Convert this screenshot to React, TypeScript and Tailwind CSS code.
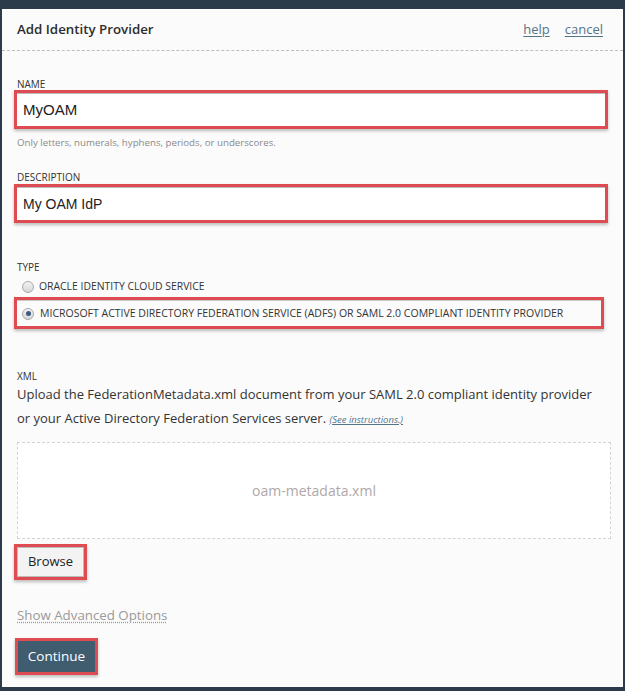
import React from "react";

const font = { fontFamily: '"Open Sans", "Noto Sans", sans-serif' };
const arial = { fontFamily: '"Liberation Sans", Arial, sans-serif' };

function RedBox({ children, className }: { children: React.ReactNode; className: string }) {
  return (
    <div className={"border-[3px] border-[#de4b51] shadow-[0_2px_3px_rgba(0,0,0,0.25)] " + className}>
      {children}
    </div>
  );
}

function Radio({ checked }: { checked?: boolean }) {
  return (
    <span className="inline-flex h-[12px] w-[12px] shrink-0 items-center justify-center rounded-full border border-[#a9a9a9] bg-gradient-to-b from-[#f4f4f4] to-[#d6d6d6]">
      {checked && <span className="h-[5px] w-[5px] rounded-full bg-[#3d5a80]" />}
    </span>
  );
}

export default function App() {
  return (
    <div className="h-[691px] w-[625px] bg-[#2c3b49] pb-[4px] pl-[2px] pr-[2px] pt-[9px]" style={font}>
      <div className="flex h-full flex-col bg-[#fbfbfb] text-[#333]">
        <div className="flex h-[42px] shrink-0 items-center justify-between border-b border-dashed border-[#bdbdbd] pl-[15px] pr-[20px]">
          <span className="text-[13.3px] font-semibold text-[#2d2d2d]">Add Identity Provider</span>
          <div className="flex gap-[15px] text-[13px] text-[#55758a]">
            <span className="underline underline-offset-2">help</span>
            <span className="underline underline-offset-2">cancel</span>
          </div>
        </div>

        <div className="flex flex-col pl-[12px] pr-[10px]">
          <div className="mt-[27px] pl-[3px] text-[10px] leading-[12px] uppercase text-[#333]">Name</div>
          <RedBox className="mt-[0px] h-[39px] w-[594px]">
            <div className="flex h-full items-center border-t border-[#bbb] bg-white pl-[6px] text-[15px] text-[#222]" style={arial}>
              MyOAM
            </div>
          </RedBox>
          <div className="mt-[8px] pl-[3px] text-[9.7px] leading-[12px] text-[#8a8a8a]">
            Only letters, numerals, hyphens, periods, or underscores.
          </div>

          <div className="mt-[22px] pl-[3px] text-[10px] leading-[12px] uppercase">Description</div>
          <RedBox className="mt-[1px] h-[39px] w-[594px]">
            <div className="flex h-full items-center border-t border-[#bbb] bg-white pl-[6px] text-[14px] text-[#222]" style={arial}>
              My OAM IdP
            </div>
          </RedBox>

          <div className="mt-[38px] pl-[3px] text-[10px] leading-[12px] uppercase">Type</div>
          <div className="mt-[6px] flex h-[16px] items-center gap-[5px] pl-[8px] text-[10.4px] uppercase">
            <Radio />
            <span>Oracle Identity Cloud Service</span>
          </div>
          <RedBox className="mt-[2px] h-[32px] w-[590px]">
            <div className="flex h-full items-center gap-[6px] border-t border-[#c8c8c8] pl-[5px] text-[10.5px] uppercase">
              <Radio checked />
              <span>Microsoft Active Directory Federation Service (ADFS) or SAML 2.0 Compliant Identity Provider</span>
            </div>
          </RedBox>

          <div className="mt-[41px] pl-[3px] text-[10px] leading-[12px] uppercase">XML</div>
          <div className="w-[586px] pl-[3px] text-[13px] leading-[24px] text-[#333]">
            Upload the FederationMetadata.xml document from your SAML 2.0 compliant identity provider or your Active Directory Federation Services server.{" "}
            <span className="text-[9.5px] leading-[12px] italic text-[#55758a] underline">(See instructions.)</span>
          </div>

          <div className="mt-[12px] ml-[3px] flex h-[97px] w-[594px] items-center justify-center border border-dashed border-[#d4d4d4] bg-white text-[14px] text-[#b0a8a8]">
            oam-metadata.xml
          </div>

          <RedBox className="mt-[5px] h-[36px] w-[73px]">
            <div className="flex h-full items-center justify-center border border-[#bbb] bg-[#f3f3f3] text-[13px] text-[#222]">
              Browse
            </div>
          </RedBox>

          <div className="mt-[25px] pl-[3px] text-[13.3px] leading-[20px] text-[#9a9a9a]">
            <span className="underline decoration-dotted underline-offset-2">Show Advanced Options</span>
          </div>

          <RedBox className="mt-[13px] ml-[1px] h-[37px] w-[83px]">
            <div className="flex h-full items-center justify-center bg-[#3f5d6f] text-[13.5px] text-white">
              Continue
            </div>
          </RedBox>
        </div>
      </div>
    </div>
  );
}
